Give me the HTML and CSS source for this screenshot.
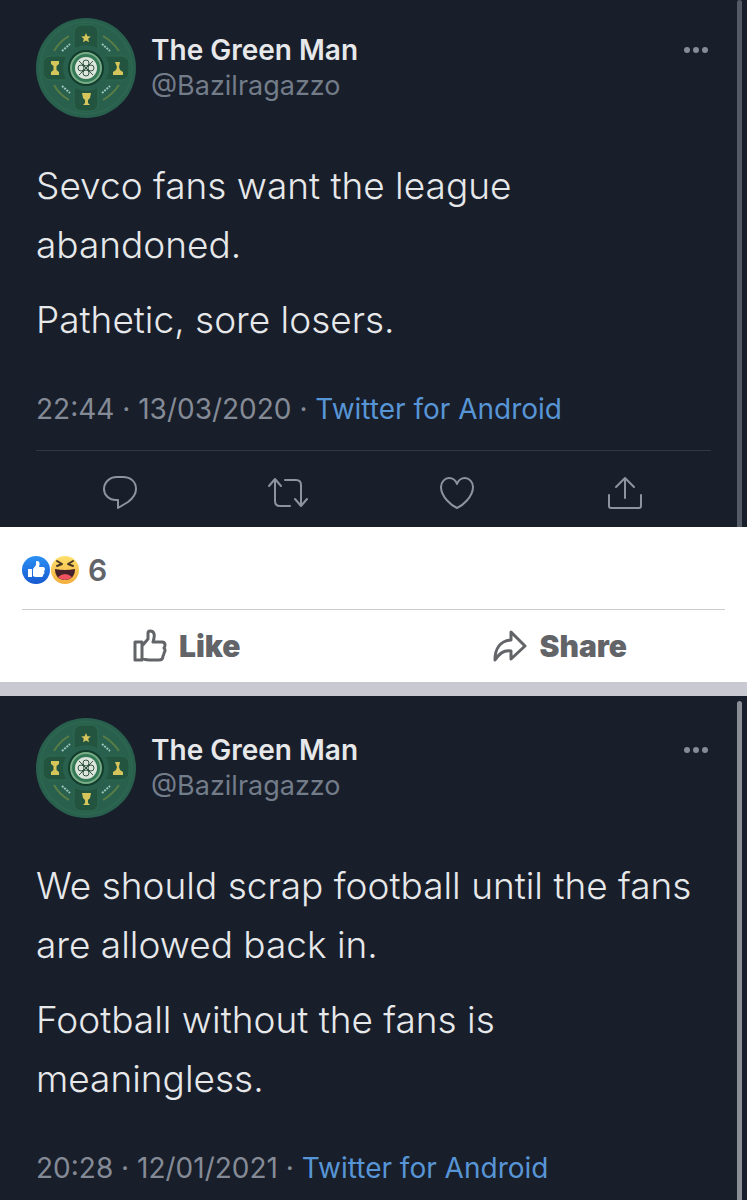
FILE: index.html
```
<!DOCTYPE html>
<html lang="en">
<head>
  <meta charset="UTF-8">
  <title>The Green Man</title>
  <meta name="viewport" content="width=device-width, initial-scale=1.0">
  <link rel="stylesheet" href="styles.css">
</head>
<body>
  <!-- shared shapes -->
  <svg class="defs" width="0" height="0" aria-hidden="true">
    <symbol id="badge" viewBox="0 0 100 100">
      <circle cx="50" cy="50" r="50" fill="#28604d"/>
      <circle cx="50" cy="50" r="46" fill="none" stroke="#2d6650" stroke-width="2"/>
      <g fill="#235440" stroke="#2f6b51" stroke-width="1">
        <rect x="38" y="7" width="24" height="86" rx="7"/>
        <rect x="7" y="38" width="86" height="24" rx="7"/>
      </g>
      <circle cx="50" cy="50" r="23" fill="#28604d"/>
      <circle cx="50" cy="50" r="18" fill="#123c2b"/>
      <circle cx="50" cy="50" r="15" fill="#357a56" stroke="#79ad87" stroke-width="2"/>
      <circle cx="50" cy="50" r="11" fill="#dce6dc"/>
      <g fill="none" stroke="#355545" stroke-width="1">
        <circle cx="50" cy="45" r="3"/>
        <circle cx="55" cy="50" r="3"/>
        <circle cx="50" cy="55" r="3"/>
        <circle cx="45" cy="50" r="3"/>
        <path d="M43 43l14 14M57 43L43 57"/>
      </g>
      <g fill="#d6c55a">
        <path d="M50 15l1.400 3.200 3.400.3-2.600 2.300.8 3.400-3-1.800-3 1.800.8-3.400-2.600-2.300 3.400-.3z"/>
        <path d="M15 43h8v3l-2.500 2v4l2.500 2v3h-8v-3l2.500-2v-4l-2.500-2z"/>
        <path d="M79 44h5l-1 5 1 3 3 2v3h-10v-3l3-2 1-3z"/>
        <path d="M46 75h9l-1 5-2 2v3l2 2h-7l2-2v-3l-2-2z"/>
      </g>
      <g fill="none" stroke="#5a7d45" stroke-width="2">
        <path d="M18 33Q23 24 33 18M67 18Q77 24 83 33M18 67Q23 76 33 82M67 82Q77 76 83 67"/>
      </g>
      <g fill="none" stroke="#9bc4bd" stroke-width="2" stroke-dasharray="2 1">
        <path d="M26 33l8-7M66 26l8 7M26 68l8 7M66 75l8-7"/>
      </g>
    </symbol>
    <symbol id="dots" viewBox="0 0 26 8">
      <circle cx="4" cy="4" r="3"/>
      <circle cx="13" cy="4" r="3"/>
      <circle cx="22" cy="4" r="3"/>
    </symbol>
  </svg>

  <article class="tweet">
    <header class="tweet-header">
      <svg class="avatar" role="img" aria-label="The Green Man"><use href="#badge"/></svg>
      <div class="author">
        <div class="name">The Green Man</div>
        <div class="handle">@Bazilragazzo</div>
      </div>
      <button class="more" aria-label="More"><svg width="26" height="8"><use href="#dots"/></svg></button>
    </header>
    <div class="tweet-text">
      <p>Sevco fans want the league abandoned.</p>
      <p>Pathetic, sore losers.</p>
    </div>
    <div class="meta">22:44 · 13/03/2020 · <a href="#">Twitter for Android</a></div>
    <div class="actions">
      <button aria-label="Reply">
        <svg width="40" height="40" viewBox="0 0 40 40"><path d="M17 4h6C31 4 36 9 36 16c0 6-4 10-8 13l-10 6v-8h-2C9 27 4 22 4 16S9 4 17 4z"/></svg>
      </button>
      <button aria-label="Retweet">
        <svg width="40" height="40" viewBox="0 0 40 40"><path d="M1 13l6-7 6 7M7 7v21q0 5 5 5h10M17 7h11q5 0 5 5v21M27 26l6 7 6-7"/></svg>
      </button>
      <button aria-label="Like">
        <svg width="40" height="40" viewBox="0 0 40 40"><path d="M20 35C15 33 4 24 4 14c0-5 4-9 8-9 4 0 7 3 8 6 1-3 4-6 8-6 4 0 8 4 8 9 0 10-11 19-16 21z"/></svg>
      </button>
      <button aria-label="Share">
        <svg width="40" height="40" viewBox="0 0 40 40"><path d="M20 25V5M11 14l9-9 9 9M4 22v11q0 2 2 2h28q2 0 2-2V22"/></svg>
      </button>
    </div>
    <div class="scrollbar"></div>
  </article>

  <section class="post-footer">
    <div class="reactions">
      <svg width="28" height="28" viewBox="0 0 28 28">
        <defs>
          <linearGradient id="blue" x2="0" y2="1"><stop stop-color="#2b91f5"/><stop offset="1" stop-color="#1759cf"/></linearGradient>
        </defs>
        <circle cx="14" cy="14" r="14" fill="url(#blue)"/>
        <path fill="#fff" d="M6 13h4v8H6zM11 13l3-4V6q0-1 1-1c3 0 3 3 2 6h4q2 0 2 2 0 1-1 2 1 1 0 3-1 0-1 2 0 1-2 1h-5q-2 0-3-1z"/>
      </svg>
      <svg width="28" height="28" viewBox="0 0 28 28">
        <defs>
          <linearGradient id="yellow" x2="0" y2="1"><stop stop-color="#fde06c"/><stop offset="1" stop-color="#f4ae3d"/></linearGradient>
        </defs>
        <circle cx="14" cy="14" r="14" fill="url(#yellow)"/>
        <path fill="none" stroke="#493823" stroke-width="2" stroke-linecap="round" stroke-linejoin="round" d="M6 5l5 3-5 2M22 5l-5 3 5 2"/>
        <path fill="#44212a" d="M4 13q10 2 20 0c0 7-4 11-10 11S4 20 4 13z"/>
        <path fill="#f0525f" d="M7 21q7-6 14 0-3 3-7 3t-7-3z"/>
      </svg>
      <span class="count">6</span>
    </div>
    <div class="post-buttons">
      <button>
        <svg width="34" height="34" viewBox="0 0 34 34"><path d="M2 13h7v18H2zM9 17l6-7V4q0-2 2-2c5 0 5 5 3 11h9q3 0 3 3 0 2-1 3 2 2 0 5 0 2-1 3 0 4-4 4H16q-4 0-7-2"/></svg>
        Like
      </button>
      <button>
        <svg width="34" height="34" viewBox="0 0 34 34"><path d="M18 3l14 14-14 13v-8C10 21 6 25 2 31c0-11 5-19 16-20z"/></svg>
        Share
      </button>
    </div>
  </section>

  <article class="tweet second">
    <header class="tweet-header">
      <svg class="avatar" role="img" aria-label="The Green Man"><use href="#badge"/></svg>
      <div class="author">
        <div class="name">The Green Man</div>
        <div class="handle">@Bazilragazzo</div>
      </div>
      <button class="more" aria-label="More"><svg width="26" height="8"><use href="#dots"/></svg></button>
    </header>
    <div class="tweet-text">
      <p>We should scrap football until the fans are allowed back in.</p>
      <p>Football without the fans is meaningless.</p>
    </div>
    <div class="meta">20:28 · 12/01/2021 · <a href="#">Twitter for Android</a></div>
    <div class="scrollbar"></div>
  </article>
</body>
</html>
```
FILE: styles.css
```
body {
  margin: 0;
  font-family: Inter, "Liberation Sans", sans-serif;
  background-color: #fff;
}
button {
  padding: 0;
  border: none;
  background: none;
  font-family: inherit;
  cursor: pointer;
}
svg {
  display: block;
}
.defs {
  position: absolute;
}

/* tweets */
.tweet {
  position: relative;
  padding: 18px 36px 14px;
  background-color: #181e2a;
  color: #e6e8ea;
}
.tweet.second {
  padding-top: 22px;
}
.tweet-header {
  display: flex;
  align-items: center;
  gap: 15px;
}
.avatar {
  width: 100px;
  height: 100px;
}
.author {
  flex: 1;
  line-height: 36px;
}
.name {
  font-size: 28px;
  font-weight: 600;
}
.handle {
  font-size: 27px;
  color: #737c89;
}
.more {
  align-self: flex-start;
  padding: 28px 2px;
  fill: #858c98;
}
.tweet-text {
  margin: 38px -16px 42px 0;
  font-size: 37px;
  font-weight: 300;
  line-height: 59px;
}
.tweet-text p {
  margin: 0 0 16px;
}
.tweet-text p:last-child {
  margin-bottom: 0;
}
.meta {
  font-size: 28px;
  line-height: 36px;
  color: #858b96;
}
.meta a {
  color: #5795d6;
  text-decoration: none;
}
.actions {
  display: grid;
  grid-template-columns: repeat(4, 1fr);
  justify-items: center;
  margin-top: 23px;
  padding: 22px 2px 0 0;
  border-top: 1px solid #303743;
}
.actions svg {
  fill: none;
  stroke: #8c94a0;
  stroke-width: 2;
  stroke-linecap: round;
  stroke-linejoin: round;
}
.scrollbar {
  position: absolute;
  top: 0;
  right: 5px;
  bottom: 0;
  width: 5px;
  border-radius: 3px 3px 0 0;
  background-color: #545a66;
}
.second .scrollbar {
  top: 5px;
  background-color: #8b8e95;
}

/* likes and share row */
.post-footer {
  border-bottom: 14px solid #c9c9d1;
  color: #626468;
}
.reactions {
  display: flex;
  align-items: center;
  gap: 1px;
  margin: 0 22px;
  padding: 25px 0 21px;
  border-bottom: 1px solid #cccdd0;
}
.count {
  margin-left: 8px;
  font-size: 30px;
  font-weight: 600;
  line-height: 36px;
}
.post-buttons {
  display: grid;
  grid-template-columns: 1fr 1fr;
}
.post-buttons button {
  display: flex;
  align-items: center;
  justify-content: center;
  gap: 12px;
  height: 72px;
  font-size: 30px;
  font-weight: 900;
  color: #626468;
}
.post-buttons svg {
  fill: none;
  stroke: #626468;
  stroke-width: 3;
  stroke-linejoin: round;
}
```
